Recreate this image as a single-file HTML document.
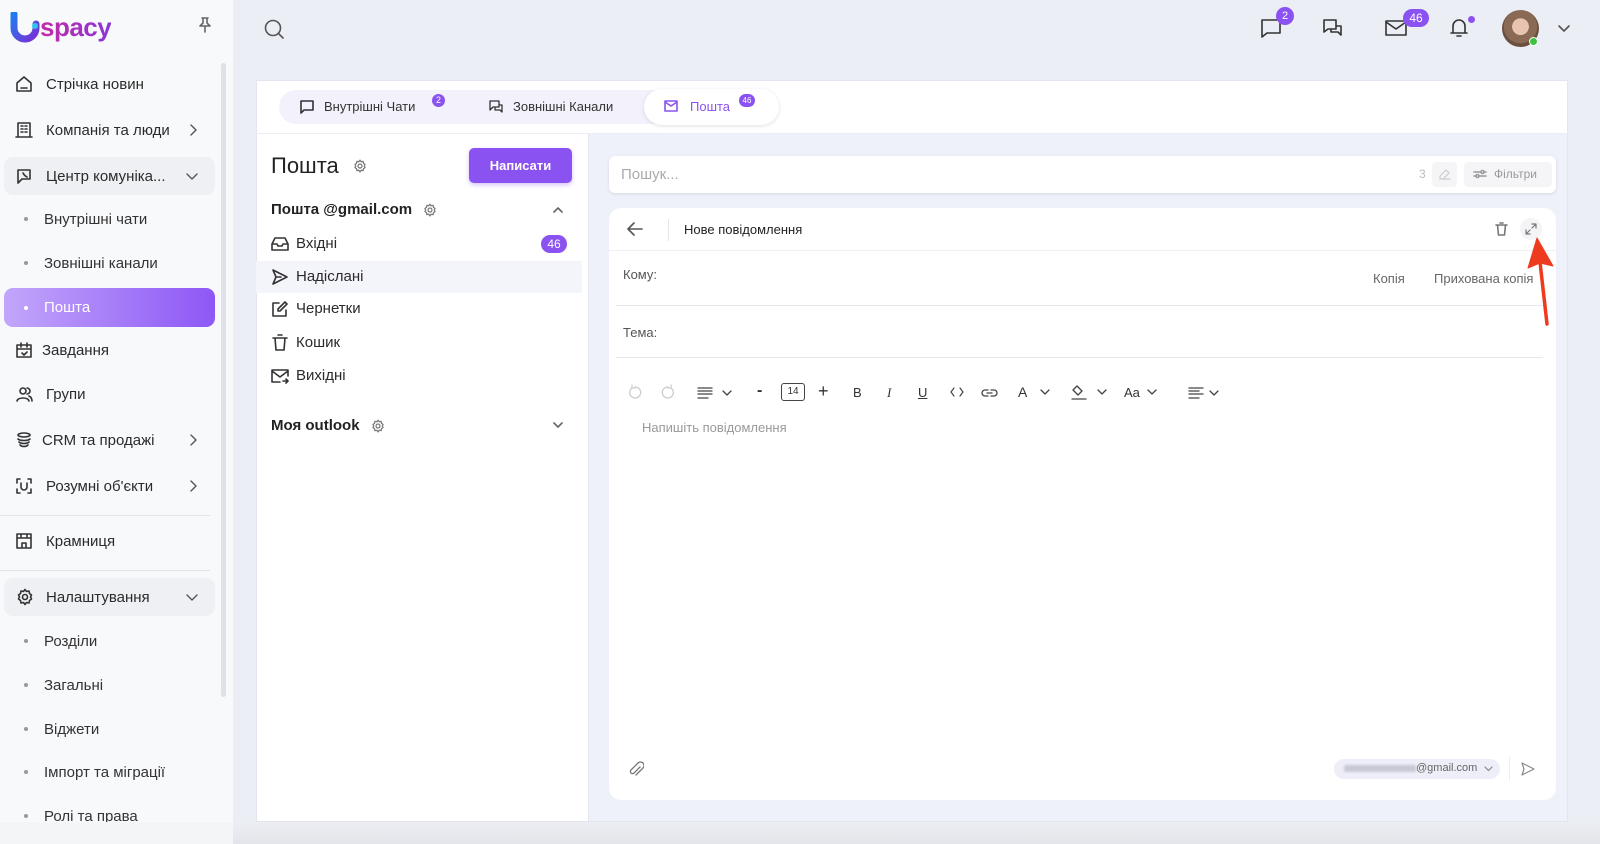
<!DOCTYPE html>
<html><head><meta charset="utf-8"><style>
*{box-sizing:border-box;margin:0;padding:0}
body{width:1600px;height:844px;overflow:hidden;background:#eceef6;font-family:"Liberation Sans",sans-serif;color:#222;position:relative}
.abs{position:absolute}
.sb{left:0;top:0;width:233px;height:844px;background:#f8f9fb}
.it{position:absolute;left:0;width:215px;display:flex;align-items:center;font-size:15px;color:#2b2b2b;height:38px;transform:translateY(-19px)}
.it svg{position:absolute;left:15px}
.it .t{position:absolute;left:46px}
.it svg.ch{left:189px}
.sub .t{left:44px;color:#333}
.sub:before{content:"";position:absolute;left:24px;width:4px;height:4px;border-radius:50%;background:#999}
.hl{left:4px;width:211px;background:#eff0f4;border-radius:9px}
svg{fill:none;stroke:#333;stroke-width:1.6;stroke-linecap:round;stroke-linejoin:round}
.badge{position:absolute;background:#8a52f0;color:#fff;border-radius:10px;font-size:11px;text-align:center}
.ml{position:absolute;left:271px;font-size:15px;color:#2b2b2b;transform:translateY(-9px)}
.ml svg{position:absolute;left:0;top:0}
.ml span{position:absolute;left:25px;top:0;white-space:nowrap}
.tb{position:absolute;top:384px;font-size:14px;color:#333}
</style></head><body>
<div class="abs sb"></div>
<!-- logo -->
<svg class="abs" style="left:10px;top:12px" width="30" height="32" viewBox="0 0 30 32"><defs><linearGradient id="g" x1="0" y1="0" x2="1" y2="1"><stop offset="0" stop-color="#1e7bf0"/><stop offset="1" stop-color="#7c2fd6"/></linearGradient><linearGradient id="g2" x1="0" y1="0" x2="1" y2="0"><stop offset="0" stop-color="#c02aa8"/><stop offset="1" stop-color="#8a36d8"/></linearGradient></defs><path d="M4 2v14a11 11 0 0 0 22 0V12" stroke="url(#g)" stroke-width="7" stroke-linecap="round"/><circle cx="25" cy="14" r="3" fill="#2cc4f0" stroke="none"/></svg>
<div class="abs" style="left:40px;top:12px;font-size:26px;font-weight:bold;color:#b52bb0;letter-spacing:-0.5px;background:linear-gradient(90deg,#c42aa6,#8a36d8);-webkit-background-clip:text;background-clip:text;-webkit-text-fill-color:transparent">spacy</div>
<svg class="abs" style="left:198px;top:17px" width="14" height="16" viewBox="0 0 14 16"><path d="M4 1h6M5 1v5L2 9h10L9 6V1M7 9v6" stroke="#666"/></svg>
<div class="abs" style="left:221px;top:63px;width:5px;height:634px;background:#dfe1e6;border-radius:3px"></div>

<div class="it" style="top:84px"><svg width="18" height="18" viewBox="0 0 18 18"><path d="M2 8l7-6 7 6v8H2zM6 13h6"/></svg><span class="t">Стрічка новин</span></div>
<div class="it" style="top:130px"><svg width="18" height="18" viewBox="0 0 18 18"><path d="M3 2h12v14H3zM1 16h16M6 5h2M10 5h2M6 8h2M10 8h2M6 11h2M10 11h2"/></svg><span class="t">Компанія та люди</span><svg class="ch" width="8" height="12" viewBox="0 0 8 12"><path d="M2 1l5 5-5 5" stroke="#555" stroke-width="1.4"/></svg></div>
<div class="it hl" style="top:176px"><svg width="18" height="18" viewBox="0 0 18 18" style="left:11px"><path d="M3 3h12v9H7l-4 4zM8 6c1 2 2 3 4 4"/></svg><span class="t" style="left:42px">Центр комуніка...</span><svg class="ch" style="left:182px" width="12" height="8" viewBox="0 0 12 8"><path d="M1 2l5 5 5-5" stroke="#555" stroke-width="1.4"/></svg></div>
<div class="it sub" style="top:219px"><span class="t">Внутрішні чати</span></div>
<div class="it sub" style="top:263px"><span class="t">Зовнішні канали</span></div>
<div class="it sub hl" style="top:307px;height:39px;background:linear-gradient(90deg,#c2a6fb,#8d57f6)"><span class="t" style="left:40px;color:#fff">Пошта</span></div>
<style>.sub.hl:before{background:#fff;left:20px}</style>
<div class="it" style="top:350px"><svg width="18" height="18" viewBox="0 0 18 18"><path d="M2 4h14v12H2zM2 8h14M6 2v4M12 2v4M7 12l2 2 3-3"/></svg><span class="t" style="left:42px">Завдання</span></div>
<div class="it" style="top:394px"><svg width="18" height="18" viewBox="0 0 18 18"><circle cx="8" cy="6" r="3"/><path d="M2 16c1-4 11-4 12 0M12 3a3 3 0 0 1 0 6M14 11c2 1 3 3 3 5"/></svg><span class="t">Групи</span></div>
<div class="it" style="top:440px"><svg width="18" height="18" viewBox="0 0 18 18"><ellipse cx="9" cy="4" rx="6" ry="2"/><path d="M3 8c2 2 10 2 12 0M4 11c2 2 8 2 10 0M5 14c2 2 6 2 8 0"/></svg><span class="t" style="left:42px">CRM та продажі</span><svg class="ch" width="8" height="12" viewBox="0 0 8 12"><path d="M2 1l5 5-5 5" stroke="#555" stroke-width="1.4"/></svg></div>
<div class="it" style="top:486px"><svg width="18" height="18" viewBox="0 0 18 18"><path d="M2 6V2h3M13 2h3v4M16 12v4h-3M5 16H2v-4M6 6v4a3 3 0 0 0 6 0V6"/></svg><span class="t">Розумні об'єкти</span><svg class="ch" width="8" height="12" viewBox="0 0 8 12"><path d="M2 1l5 5-5 5" stroke="#555" stroke-width="1.4"/></svg></div>
<div class="abs" style="left:0;top:515px;width:210px;height:1px;background:#e2e3e8"></div>
<div class="it" style="top:541px"><svg width="18" height="18" viewBox="0 0 18 18"><path d="M2 2h14v14H2zM2 6h14M7 16v-5h4v5M6 2v4M12 2v4"/></svg><span class="t">Крамниця</span></div>
<div class="abs" style="left:0;top:570px;width:210px;height:1px;background:#e2e3e8"></div>
<div class="it hl" style="top:597px"><svg width="18" height="18" viewBox="0 0 18 18" style="left:12px"><circle cx="9" cy="9" r="2.5"/><path d="M9 1.5l1.5 2 2.5-.5.5 2.5 2 1.5-1 2 1 2-2 1.5-.5 2.5-2.5-.5L9 16.5l-1.5-2-2.5.5-.5-2.5-2-1.5 1-2-1-2 2-1.5.5-2.5 2.5.5z"/></svg><span class="t" style="left:42px">Налаштування</span><svg class="ch" style="left:182px" width="12" height="8" viewBox="0 0 12 8"><path d="M1 2l5 5 5-5" stroke="#555" stroke-width="1.4"/></svg></div>
<div class="it sub" style="top:641px"><span class="t">Розділи</span></div>
<div class="it sub" style="top:685px"><span class="t">Загальні</span></div>
<div class="it sub" style="top:729px"><span class="t">Віджети</span></div>
<div class="it sub" style="top:772px"><span class="t">Імпорт та міграції</span></div>
<div class="it sub" style="top:816px"><span class="t">Ролі та права</span></div>

<!-- header -->
<svg class="abs" style="left:263px;top:18px" width="22" height="22" viewBox="0 0 22 22"><circle cx="10" cy="10" r="7.5" stroke="#555"/><path d="M16 16l4 4" stroke="#555"/></svg>
<svg class="abs" style="left:1260px;top:17px" width="22" height="22" viewBox="0 0 22 22"><path d="M2 3h18v13H7l-5 4z"/></svg>
<div class="badge" style="left:1276px;top:7px;width:18px;height:18px;line-height:18px;border-radius:9px">2</div>
<svg class="abs" style="left:1322px;top:17px" width="22" height="22" viewBox="0 0 22 22"><path d="M2 3h12v9H6l-4 3zM9 12v3h7l3 3V9h-5"/></svg>
<svg class="abs" style="left:1385px;top:19px" width="22" height="18" viewBox="0 0 22 18"><path d="M1 2h20v14H1zM1 3l10 7 10-7"/></svg>
<div class="badge" style="left:1403px;top:9px;width:26px;height:18px;line-height:18px;font-size:12px">46</div>
<svg class="abs" style="left:1449px;top:17px" width="20" height="22" viewBox="0 0 20 22"><path d="M4 16V9a6 6 0 0 1 12 0v7h2H2zM8 19h4"/></svg>
<div class="abs" style="left:1468px;top:16px;width:7px;height:7px;border-radius:50%;background:#8a52f0"></div>
<div class="abs" style="left:1502px;top:10px;width:37px;height:37px;border-radius:50%;background:radial-gradient(circle at 50% 45%,#e8c4b0 0 30%,#8a6a55 31% 60%,#6b5040 61%)"></div>
<div class="abs" style="left:1529px;top:37px;width:9px;height:9px;border-radius:50%;background:#3ec13e;border:1.5px solid #fff"></div>
<svg class="abs" style="left:1557px;top:24px" width="14" height="9" viewBox="0 0 14 9"><path d="M2 2l5 5 5-5" stroke="#555"/></svg>

<!-- main card -->
<div class="abs" style="left:256px;top:80px;width:1312px;height:742px;background:#fff;border:1px solid #e3e5ee"></div>
<div class="abs" style="left:256px;top:133px;width:1312px;height:1px;background:#eceef5"></div>
<div class="abs" style="left:279px;top:90px;width:500px;height:34px;background:#f3f1fb;border-radius:17px"></div>
<div class="abs" style="left:644px;top:89px;width:135px;height:36px;background:#fff;border-radius:18px;box-shadow:0 1px 4px rgba(0,0,0,.12)"></div>
<svg class="abs" style="left:299px;top:99px" width="16" height="16" viewBox="0 0 16 16"><path d="M2 2h12v9H5l-3 3z"/></svg>
<div class="abs" style="left:324px;top:99px;font-size:13px;color:#333">Внутрішні Чати</div>
<div class="badge" style="left:432px;top:94px;width:13px;height:13px;line-height:13px;font-size:9px">2</div>
<svg class="abs" style="left:488px;top:99px" width="16" height="16" viewBox="0 0 16 16"><path d="M2 2h9v6H5l-3 3zM7 8v3h5l2 2V6h-3" stroke-width="1.3"/></svg>
<div class="abs" style="left:513px;top:99px;font-size:13px;color:#333">Зовнішні Канали</div>
<svg class="abs" style="left:664px;top:100px" width="14" height="12" viewBox="0 0 14 12"><path d="M1 1h12v10H1zM1 2l6 4 6-4" stroke="#8a52f0"/></svg>
<div class="abs" style="left:690px;top:99px;font-size:13px;color:#8a52f0">Пошта</div>
<div class="badge" style="left:739px;top:94px;width:16px;height:13px;line-height:13px;font-size:8px">46</div>

<!-- left mail column -->
<div class="abs" style="left:271px;top:153px;font-size:22px;color:#222">Пошта</div>
<svg class="abs" style="left:353px;top:159px" width="14" height="14" viewBox="0 0 18 18"><circle cx="9" cy="9" r="2.5" stroke="#777"/><path stroke="#777" d="M9 1.5l1.5 2 2.5-.5.5 2.5 2 1.5-1 2 1 2-2 1.5-.5 2.5-2.5-.5L9 16.5l-1.5-2-2.5.5-.5-2.5-2-1.5 1-2-1-2 2-1.5.5-2.5 2.5.5z"/></svg>
<div class="abs" style="left:469px;top:148px;width:103px;height:35px;background:#8a52f0;border-radius:5px;color:#fff;font-size:13px;font-weight:bold;text-align:center;line-height:35px;box-shadow:0 2px 5px rgba(138,82,240,.35)">Написати</div>
<div class="abs" style="left:271px;top:201px;font-size:15px;font-weight:bold;color:#222">Пошта @gmail.com</div>
<svg class="abs" style="left:423px;top:203px" width="14" height="14" viewBox="0 0 18 18"><circle cx="9" cy="9" r="2.5" stroke="#777"/><path stroke="#777" d="M9 1.5l1.5 2 2.5-.5.5 2.5 2 1.5-1 2 1 2-2 1.5-.5 2.5-2.5-.5L9 16.5l-1.5-2-2.5.5-.5-2.5-2-1.5 1-2-1-2 2-1.5.5-2.5 2.5.5z"/></svg>
<svg class="abs" style="left:553px;top:206px" width="10" height="7" viewBox="0 0 10 7"><path d="M1 6l4-4 4 4" stroke="#666"/></svg>
<div class="abs" style="left:256px;top:261px;width:326px;height:32px;background:#f4f4fb"></div>
<div class="ml" style="top:244px"><svg width="18" height="18" viewBox="0 0 18 18"><path d="M1 9l3-6h10l3 6v6H1zM1 9h5l1 2h4l1-2h5"/></svg><span>Вхідні</span></div>
<div class="badge" style="left:541px;top:235px;width:26px;height:18px;line-height:18px;font-size:12px;border-radius:9px">46</div>
<div class="ml" style="top:277px"><svg width="18" height="18" viewBox="0 0 18 18"><path d="M2 2l14 7-14 7 3-7zM5 9h5"/></svg><span>Надіслані</span></div>
<div class="ml" style="top:309px"><svg width="18" height="18" viewBox="0 0 18 18"><path d="M8 3H2v13h13v-6M14 2l2 2-7 7H7V9z"/></svg><span>Чернетки</span></div>
<div class="ml" style="top:343px"><svg width="18" height="18" viewBox="0 0 18 18"><path d="M2 4h14M7 1h4M4 4l1 12h8l1-12"/></svg><span>Кошик</span></div>
<div class="ml" style="top:376px"><svg width="18" height="18" viewBox="0 0 18 18"><path d="M9 15H1V3h16v6M1 4l8 6 8-6M12 14h5M15 12l2 2-2 2"/></svg><span>Вихідні</span></div>
<div class="abs" style="left:271px;top:417px;font-size:15px;font-weight:bold;color:#222">Моя outlook</div>
<svg class="abs" style="left:371px;top:419px" width="14" height="14" viewBox="0 0 18 18"><circle cx="9" cy="9" r="2.5" stroke="#777"/><path stroke="#777" d="M9 1.5l1.5 2 2.5-.5.5 2.5 2 1.5-1 2 1 2-2 1.5-.5 2.5-2.5-.5L9 16.5l-1.5-2-2.5.5-.5-2.5-2-1.5 1-2-1-2 2-1.5.5-2.5 2.5.5z"/></svg>
<svg class="abs" style="left:553px;top:422px" width="10" height="7" viewBox="0 0 10 7"><path d="M1 1l4 4 4-4" stroke="#666"/></svg>

<!-- right area -->
<div class="abs" style="left:588px;top:134px;width:979px;height:687px;background:#eef0fa;border-left:1px solid #e3e5ee"></div>
<div class="abs" style="left:609px;top:156px;width:947px;height:37px;background:#fff;border-radius:6px;box-shadow:0 1px 3px rgba(0,0,0,.1)"></div>
<div class="abs" style="left:621px;top:166px;font-size:15px;color:#aaa">Пошук...</div>
<div class="abs" style="left:1419px;top:167px;font-size:12px;color:#bbb">3</div>
<div class="abs" style="left:1432px;top:162px;width:25px;height:25px;background:#f5f5f8;border-radius:4px"></div>
<svg class="abs" style="left:1438px;top:168px" width="13" height="13" viewBox="0 0 13 13"><path d="M8 2l3 3-6 6H2V8zM4 11h8" stroke="#ccc" stroke-width="1.2"/></svg>
<div class="abs" style="left:1464px;top:162px;width:88px;height:25px;background:#f5f5f8;border-radius:4px;font-size:12px;color:#999;line-height:25px;padding-left:30px">Фільтри</div>
<svg class="abs" style="left:1473px;top:169px" width="14" height="10" viewBox="0 0 14 10"><path d="M1 3h7M11 3h2M1 7h2M6 7h7" stroke="#999"/><circle cx="9.5" cy="3" r="1.5" stroke="#999"/><circle cx="4.5" cy="7" r="1.5" stroke="#999"/></svg>

<div class="abs" style="left:609px;top:208px;width:947px;height:592px;background:#fff;border-radius:12px"></div>
<svg class="abs" style="left:627px;top:222px" width="16" height="14" viewBox="0 0 16 14"><path d="M15 7H2M7 1L1 7l6 6" stroke="#555"/></svg>
<div class="abs" style="left:668px;top:219px;width:1px;height:22px;background:#e6e6ea"></div>
<div class="abs" style="left:684px;top:222px;font-size:13px;color:#222">Нове повідомлення</div>
<svg class="abs" style="left:1495px;top:222px" width="13" height="14" viewBox="0 0 13 14"><path d="M1 3h11M5 1h3M2.5 3l1 10h6l1-10" stroke="#777"/></svg>
<div class="abs" style="left:1520px;top:218px;width:22px;height:22px;border-radius:50%;background:#f4f4f6"></div>
<svg class="abs" style="left:1525px;top:223px" width="12" height="12" viewBox="0 0 12 12"><path d="M7 1h4v4M11 1L7 5M5 11H1V7M1 11l4-4" stroke="#777" stroke-width="1.2"/></svg>
<div class="abs" style="left:609px;top:250px;width:947px;height:1px;background:#f0f0f3"></div>
<div class="abs" style="left:623px;top:267px;font-size:13px;color:#555">Кому:</div>
<div class="abs" style="left:1373px;top:271px;font-size:13px;color:#666">Копія</div>
<div class="abs" style="left:1434px;top:271px;font-size:13px;color:#666">Прихована копія</div>
<div class="abs" style="left:616px;top:305px;width:927px;height:1px;background:#e8e8ec"></div>
<div class="abs" style="left:623px;top:325px;font-size:13px;color:#555">Тема:</div>
<div class="abs" style="left:616px;top:357px;width:927px;height:1px;background:#e8e8ec"></div>

<!-- toolbar -->
<svg class="abs" style="left:628px;top:384px" width="14" height="16" viewBox="0 0 14 16"><path d="M4 4a5.5 5.5 0 1 0 3-1M4 4V1M4 4h3" stroke="#ccc" stroke-width="1.3"/></svg>
<svg class="abs" style="left:661px;top:384px" width="14" height="16" viewBox="0 0 14 16"><path d="M10 4a5.5 5.5 0 1 1-3-1M10 4V1M10 4H7" stroke="#ccc" stroke-width="1.3"/></svg>
<svg class="abs" style="left:697px;top:386px" width="40" height="14" viewBox="0 0 40 14"><path d="M1 2h14M1 5h14M1 8h14M1 12h10M26 5l4 4 4-4" stroke="#444" stroke-width="1.3"/></svg>
<div class="tb" style="left:757px;top:382px;font-size:16px;font-weight:bold">-</div>
<div class="abs" style="left:781px;top:383px;width:24px;height:18px;border:1.5px solid #444;border-radius:3px;font-size:10px;text-align:center;line-height:15px;color:#333">14</div>
<div class="tb" style="left:818px;top:381px;font-size:18px">+</div>
<div class="tb" style="left:853px;top:385px;font-size:13px">B</div>
<div class="tb" style="left:887px;top:385px;font-size:13px;font-style:italic;font-family:'Liberation Serif',serif">I</div>
<div class="tb" style="left:918px;top:385px;font-size:13px;text-decoration:underline">U</div>
<svg class="abs" style="left:950px;top:387px" width="14" height="10" viewBox="0 0 14 10"><path d="M4 1L1 5l3 4M10 1l3 4-3 4" stroke="#444" stroke-width="1.2"/></svg>
<svg class="abs" style="left:981px;top:388px" width="17" height="10" viewBox="0 0 17 10"><path d="M7 2H4a3 3 0 0 0 0 6h3M10 2h3a3 3 0 0 1 0 6h-3M6 5h5" stroke="#444" stroke-width="1.3"/></svg>
<div class="tb" style="left:1018px;top:384px;font-size:14px">A</div>
<svg class="abs" style="left:1040px;top:389px" width="10" height="7" viewBox="0 0 10 7"><path d="M1 1l4 4 4-4" stroke="#444" stroke-width="1.3"/></svg>
<svg class="abs" style="left:1070px;top:384px" width="40" height="16" viewBox="0 0 40 16"><path d="M7 2l5 5-4 4-5-5zM2 15h14M36 6l-4 4-4-4" stroke="#444" stroke-width="1.3"/></svg>
<div class="tb" style="left:1124px;top:385px;font-size:13px">Aa</div>
<svg class="abs" style="left:1147px;top:389px" width="10" height="7" viewBox="0 0 10 7"><path d="M1 1l4 4 4-4" stroke="#444" stroke-width="1.3"/></svg>
<svg class="abs" style="left:1188px;top:386px" width="36" height="14" viewBox="0 0 36 14"><path d="M1 2h14M1 5h10M1 8h14M1 12h10M22 5l4 4 4-4" stroke="#444" stroke-width="1.3"/></svg>
<div class="abs" style="left:642px;top:420px;font-size:13px;color:#999">Напишіть повідомлення</div>

<!-- bottom -->
<svg class="abs" style="left:628px;top:760px" width="16" height="18" viewBox="0 0 16 18"><path d="M12 7l-6 6a2 2 0 0 1-3-3l7-7a3.5 3.5 0 0 1 5 5l-7 7" stroke="#777" stroke-width="1.3"/></svg>
<div class="abs" style="left:1334px;top:759px;width:166px;height:20px;background:#eeeef8;border-radius:10px"></div>
<div class="abs" style="left:1344px;top:765px;width:72px;height:7px;background:#c9c9d6;border-radius:2px;filter:blur(1px)"></div>
<div class="abs" style="left:1416px;top:762px;font-size:11px;color:#666">@gmail.com</div>
<svg class="abs" style="left:1484px;top:766px" width="9" height="6" viewBox="0 0 9 6"><path d="M1 1l3.5 3.5L8 1" stroke="#888" stroke-width="1.2"/></svg>
<div class="abs" style="left:1509px;top:757px;width:1px;height:24px;background:#eee"></div>
<svg class="abs" style="left:1520px;top:761px" width="16" height="16" viewBox="0 0 16 16"><path d="M2 2l12 6-12 6 2-6z" stroke="#888" stroke-width="1.2"/></svg>

<!-- red arrow -->
<svg class="abs" style="left:1525px;top:232px" width="34" height="96" viewBox="0 0 34 96"><path d="M22 92L15 30" stroke="#ee3b1f" stroke-width="3.5" fill="none"/><path d="M12 6L3 36l12-5 13 3z" fill="#ee3b1f" stroke="#ee3b1f" stroke-width="1"/></svg>
<div class="abs" style="left:0;top:822px;width:1600px;height:22px;background:linear-gradient(#eceef3,#e4e5ea)"></div>
<div class="abs" style="left:0;top:822px;width:233px;height:22px;background:#f4f5f7"></div>
</body></html>
